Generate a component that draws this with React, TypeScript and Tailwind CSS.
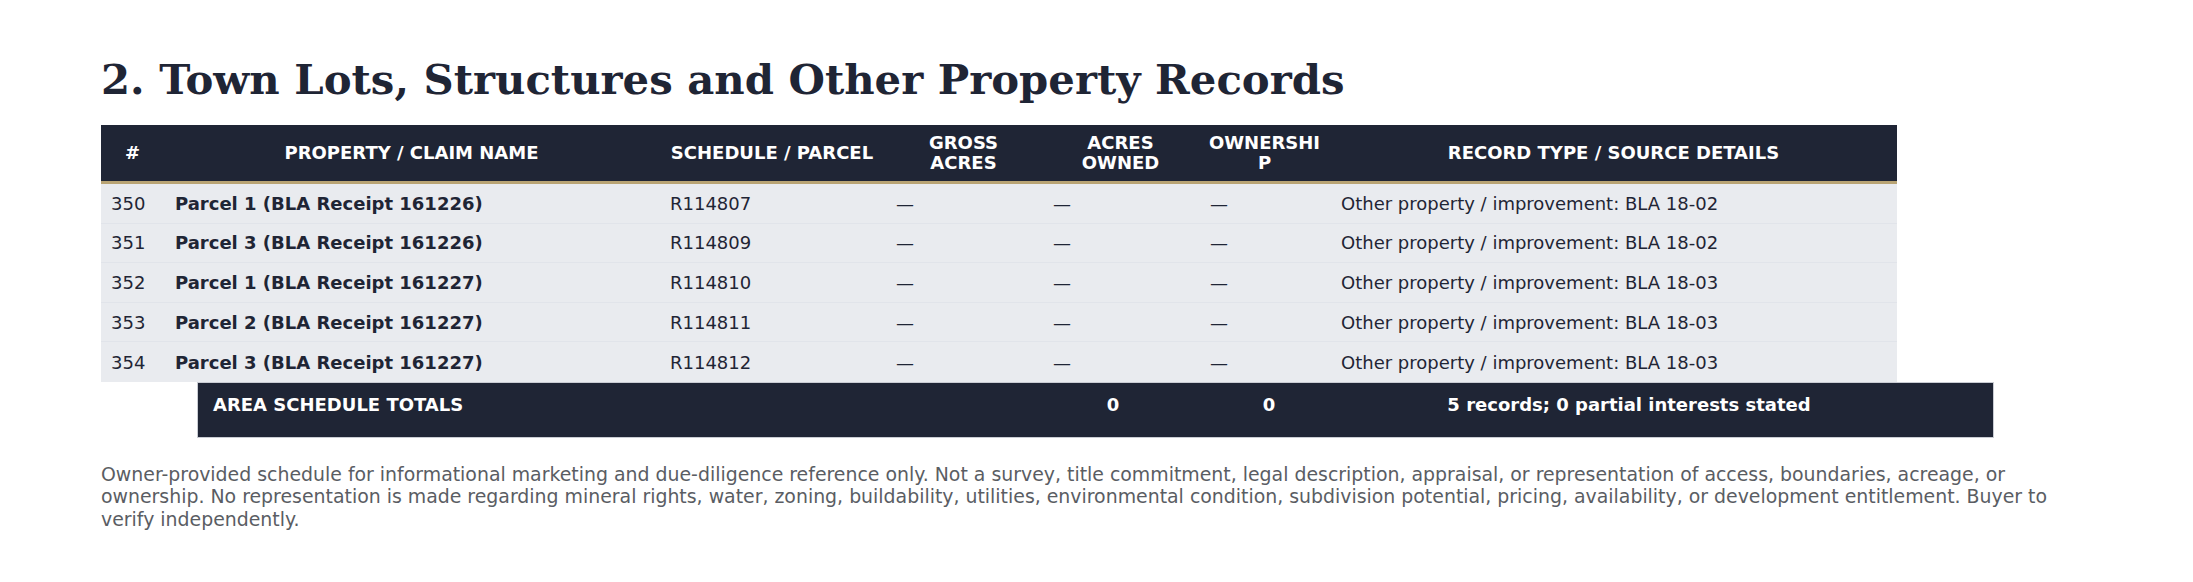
import React from 'react'

interface Row {
  num: number
  name: string
  parcel: string
  details: string
}

const rows: Row[] = [
  { num: 350, name: 'Parcel 1 (BLA Receipt 161226)', parcel: 'R114807', details: 'Other property / improvement: BLA 18-02' },
  { num: 351, name: 'Parcel 3 (BLA Receipt 161226)', parcel: 'R114809', details: 'Other property / improvement: BLA 18-02' },
  { num: 352, name: 'Parcel 1 (BLA Receipt 161227)', parcel: 'R114810', details: 'Other property / improvement: BLA 18-03' },
  { num: 353, name: 'Parcel 2 (BLA Receipt 161227)', parcel: 'R114811', details: 'Other property / improvement: BLA 18-03' },
  { num: 354, name: 'Parcel 3 (BLA Receipt 161227)', parcel: 'R114812', details: 'Other property / improvement: BLA 18-03' },
]

export default function App() {
  return (
    <div
      className="min-h-screen bg-white px-[101px] pt-[55px] text-[#1f2535]"
      style={{ fontFamily: '"DejaVu Sans", Verdana, sans-serif' }}
    >
      <h1
        className="text-[41.8px] font-bold leading-[50px] text-[#1f2535]"
        style={{ fontFamily: '"DejaVu Serif", Georgia, serif' }}
      >
        2. Town Lots, Structures and Other Property Records
      </h1>

      {/* Table */}
      <div className="mt-[20px] w-[1796px]">
        {/* Header */}
        <div className="flex h-[59px] items-center border-b-[3px] border-[#b9a474] bg-[#1f2535] text-[18px] font-bold leading-[20px] text-white">
          <div className="w-[63px] text-center">#</div>
          <div className="w-[495px] text-center">PROPERTY / CLAIM NAME</div>
          <div className="w-[226px] text-center">SCHEDULE / PARCEL</div>
          <div className="w-[157px] text-center">GROSS<br />ACRES</div>
          <div className="w-[157px] text-center">ACRES<br />OWNED</div>
          <div className="w-[131px] text-center">
            <div className="mx-auto max-w-[116px] break-all">OWNERSHIP</div>
          </div>
          <div className="flex-1 text-center">RECORD TYPE / SOURCE DETAILS</div>
        </div>

        {/* Body */}
        {rows.map((row) => (
          <div
            key={row.num}
            className="flex h-[39.6px] items-center border-b border-[#e1e4ea] bg-[#e9ebef] text-[18px] text-[#1f2535] last:border-b-0"
          >
            <div className="w-[63px] pl-[10px]">{row.num}</div>
            <div className="w-[495px] pl-[11px] font-bold">{row.name}</div>
            <div className="w-[226px] pl-[11px]">{row.parcel}</div>
            <div className="w-[157px] pl-[11px]">—</div>
            <div className="w-[157px] pl-[11px]">—</div>
            <div className="w-[131px] pl-[11px]">—</div>
            <div className="flex-1 pl-[11px]">{row.details}</div>
          </div>
        ))}
      </div>

      {/* Totals */}
      <div className="ml-[96px] flex h-[56px] w-[1797px] items-start border border-[#c9ccd3] bg-[#1f2535] pr-[45px] pt-[11px] text-[18px] font-bold leading-[22px] text-white">
        <div className="w-[800px] pl-[15px]">AREA SCHEDULE TOTALS</div>
        <div className="w-[230px] text-center">0</div>
        <div className="w-[82px] text-center">0</div>
        <div className="flex-1 text-center">5 records; 0 partial interests stated</div>
      </div>

      <p className="mt-[25px] max-w-[1975px] text-[18.9px] leading-[22.4px] text-[#5a5d63]">
        Owner-provided schedule for informational marketing and due-diligence reference only. Not a survey, title commitment, legal description, appraisal, or representation of access, boundaries, acreage, or ownership. No representation is made regarding mineral rights, water, zoning, buildability, utilities, environmental condition, subdivision potential, pricing, availability, or development entitlement. Buyer to verify independently.
      </p>
    </div>
  )
}
